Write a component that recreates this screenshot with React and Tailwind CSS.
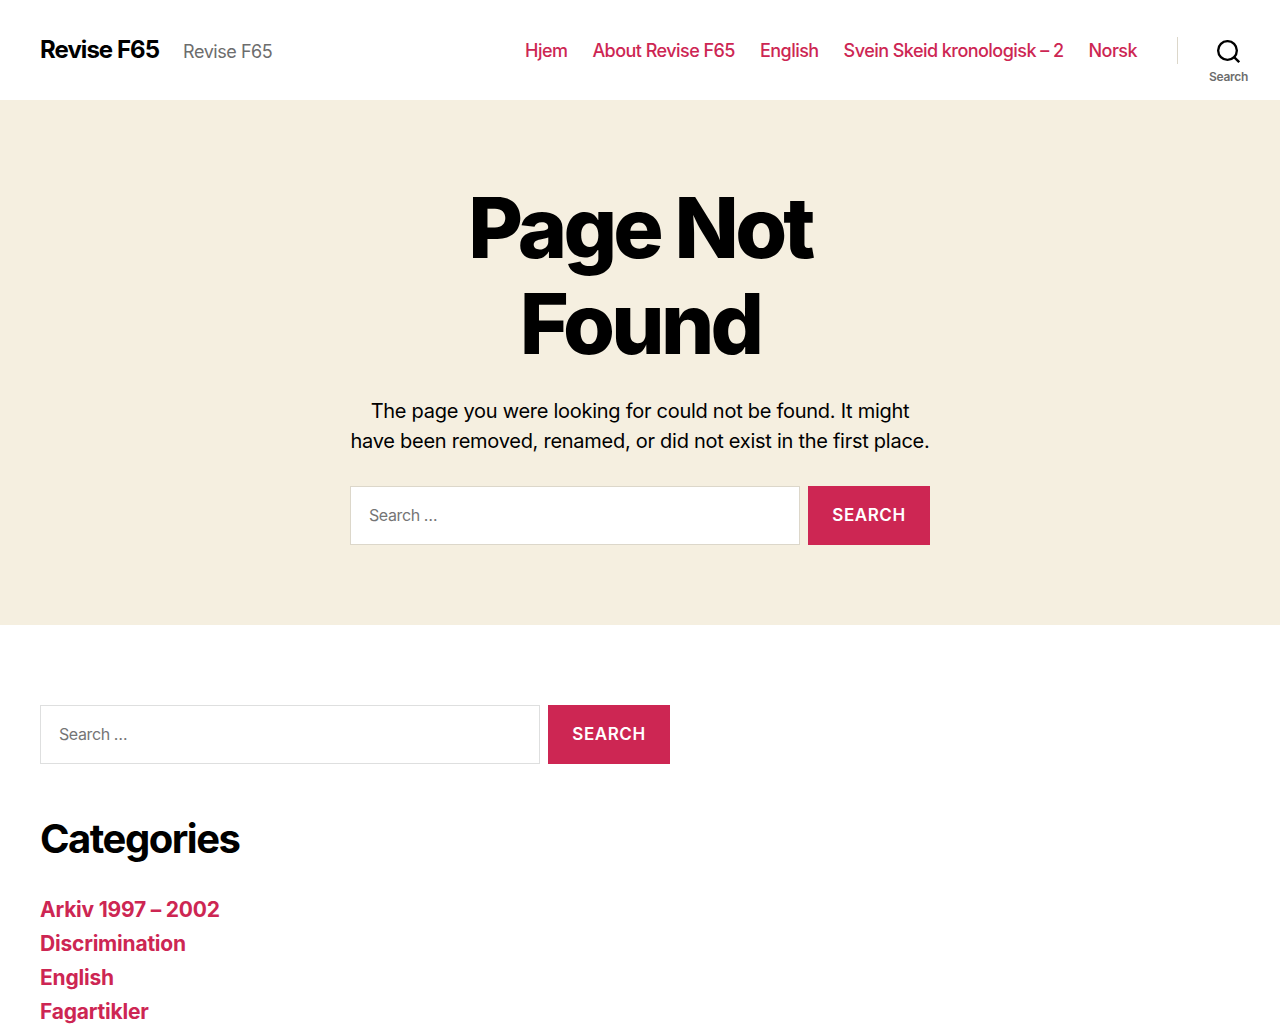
import React from "react";

const navLinks = [
  "Hjem",
  "About Revise F65",
  "English",
  "Svein Skeid kronologisk – 2",
  "Norsk",
];

const categories = ["Arkiv 1997 – 2002", "Discrimination", "English", "Fagartikler"];

const SearchIcon = () => (
  <svg
    width="23"
    height="23"
    viewBox="0 0 23 23"
    fill="none"
    stroke="currentColor"
    strokeWidth="2.33"
    aria-hidden="true"
  >
    <circle cx="10.5" cy="10.5" r="9.34" />
    <path d="M16.6 16.6 L22.2 22.2" />
  </svg>
);

const SearchForm = ({ borderClass }) => (
  <form className="flex gap-2" onSubmit={(e) => e.preventDefault()}>
    <input
      type="search"
      aria-label="Search for:"
      placeholder="Search …"
      className={`h-[59px] min-w-0 flex-1 border bg-white px-[18px] pb-0.5 text-base tracking-tight placeholder:text-[#757575] ${borderClass}`}
    />
    <button
      type="submit"
      className="h-[59px] w-[122px] bg-[#cd2653] text-[17px] font-semibold uppercase tracking-[0.0333em] text-white"
    >
      Search
    </button>
  </form>
);

const Header = () => (
  <header className="flex items-center justify-between bg-white py-7 pl-10">
    <div className="flex items-baseline gap-6">
      <a href="#" className="text-2xl leading-11 font-bold tracking-[-0.04em] text-black">
        Revise F65
      </a>
      <p className="text-lg tracking-tight text-[#6d6d6d]">Revise F65</p>
    </div>

    <div className="flex items-center">
      <nav className="pt-0.5 pr-10">
        <ul className="flex gap-[25px]">
          {navLinks.map((link) => (
            <li key={link}>
              <a href="#" className="text-lg font-medium tracking-[-0.03em] text-[#cd2653]">
                {link}
              </a>
            </li>
          ))}
        </ul>
      </nav>
      <div className="h-[27px] w-px bg-[#dcd7ca]"></div>
      <button
        type="button"
        className="relative flex h-11 items-center justify-center pt-0.5 pr-10 pl-[39px]"
      >
        <SearchIcon />
        <span className="absolute top-full -mt-px text-xs leading-3 font-semibold text-[#6d6d6d]">
          Search
        </span>
      </button>
    </div>
  </header>
);

const App = () => {
  return (
    <div className="min-h-screen bg-white font-['Inter',sans-serif] text-lg tracking-[-0.015em] text-black">
      <Header />

      <main className="bg-[#f5efe0] px-5 py-20">
        <div className="mx-auto max-w-[580px] text-center">
          <h1 className="text-[84px] leading-24 font-extrabold tracking-[-0.045em]">
            Page Not Found
          </h1>
          <p className="mt-6 mb-[30px] text-xl leading-[30px]">
            The page you were looking for could not be found. It might have been
            removed, renamed, or did not exist in the first place.
          </p>
          <SearchForm borderClass="border-[#dcd7ca]" />
        </div>
      </main>

      <aside className="max-w-[710px] px-10 pt-20">
        <SearchForm borderClass="border-[#dedfdf]" />
        <h2 className="mt-[50px] text-[40px] leading-[50px] font-bold tracking-[-0.0375em]">
          Categories
        </h2>
        <ul className="mt-[29px] text-[21px] leading-[34px] font-bold tracking-[-0.01em]">
          {categories.map((category) => (
            <li key={category}>
              <a href="#" className="text-[#cd2653]">
                {category}
              </a>
            </li>
          ))}
        </ul>
      </aside>
    </div>
  );
};

export default App;
